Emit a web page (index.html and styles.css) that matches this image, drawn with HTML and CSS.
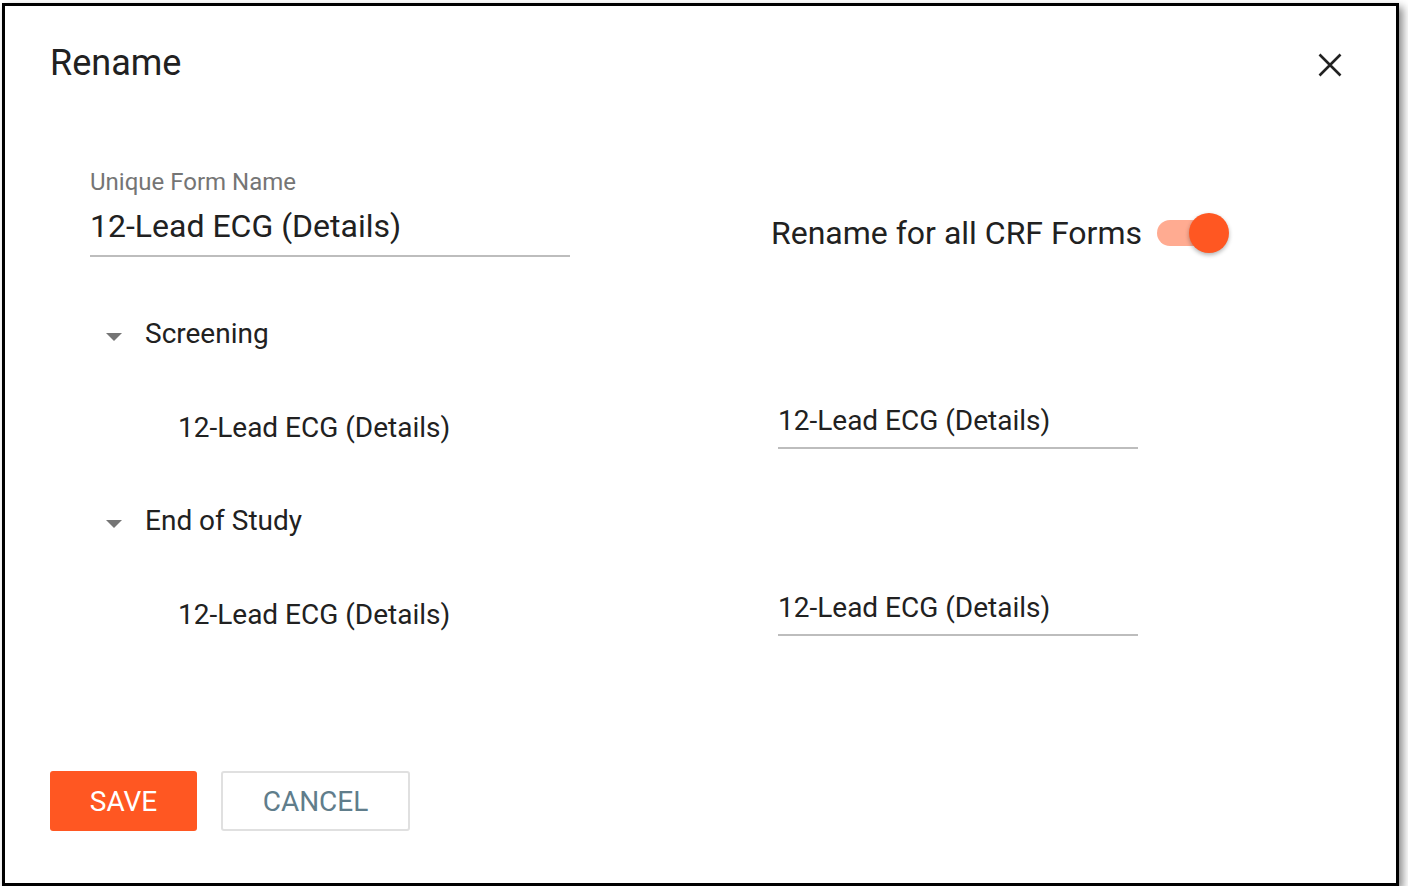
FILE: index.html
```html
<!DOCTYPE html>
<html lang="en">
<head>
  <meta charset="UTF-8">
  <meta name="viewport" content="width=device-width, initial-scale=1.0">
  <title>Rename</title>
  <link rel="stylesheet" href="styles.css">
</head>
<body>
  <div class="dialog">
    <div class="dialog-header">
      <h2 class="dialog-title">Rename</h2>
      <button class="close" aria-label="Close">
        <svg width="24" height="24" viewBox="0 0 24 24">
          <path d="M1.5 1.5 L22.5 22.5 M22.5 1.5 L1.5 22.5" stroke="#222" stroke-width="2.6" fill="none"/>
        </svg>
      </button>
    </div>

    <div class="dialog-body">
      <div class="top-row">
        <div class="main-field">
          <div class="field-label">Unique Form Name</div>
          <div class="field-value">12-Lead ECG (Details)</div>
        </div>
        <div class="toggle-wrap">
          <span class="toggle-label">Rename for all CRF Forms</span>
          <span class="switch">
            <span class="track"></span>
            <span class="thumb"></span>
          </span>
        </div>
      </div>

      <div class="group first">
        <div class="group-head"><span class="caret"></span>Screening</div>
        <div class="group-row">
          <span class="form-name">12-Lead ECG (Details)</span>
          <div class="row-input">12-Lead ECG (Details)</div>
        </div>
      </div>

      <div class="group">
        <div class="group-head"><span class="caret"></span>End of Study</div>
        <div class="group-row">
          <span class="form-name">12-Lead ECG (Details)</span>
          <div class="row-input">12-Lead ECG (Details)</div>
        </div>
      </div>
    </div>

    <div class="dialog-actions">
      <button class="btn save">SAVE</button>
      <button class="btn cancel">CANCEL</button>
    </div>
  </div>
</body>
</html>
```

FILE: styles.css
```css
* {
  box-sizing: border-box;
}

body {
  margin: 0;
  background-color: #fff;
  font-family: Roboto, 'Liberation Sans', Arial, sans-serif;
  color: #212121;
}

.dialog {
  display: flex;
  flex-direction: column;
  width: 1397px;
  height: 883px;
  margin: 3px 0 0 2px;
  border: 3px solid #000;
  background-color: #fff;
  box-shadow: 4px 4px 8px rgba(0, 0, 0, 0.45);
}

.dialog-header {
  display: flex;
  justify-content: space-between;
  align-items: flex-start;
  padding: 35px 54px 0 45px;
}

.dialog-title {
  margin: 0;
  font-size: 36px;
  font-weight: 400;
  line-height: 44px;
  color: #212121;
}

.close {
  display: flex;
  width: 24px;
  height: 24px;
  margin-top: 12px;
  padding: 0;
  border: none;
  background: none;
  cursor: pointer;
}

.dialog-body {
  padding-left: 85px;
}

.top-row {
  display: grid;
  grid-template-columns: 681px auto;
  align-items: start;
  margin-top: 84px;
}

.main-field {
  width: 480px;
  border-bottom: 2px solid #bdbdbd;
  padding-bottom: 9px;
}

.field-label {
  font-size: 24px;
  line-height: 26px;
  color: #757575;
}

.field-value {
  margin-top: 11px;
  font-size: 32px;
  line-height: 40px;
}

.toggle-wrap {
  display: flex;
  align-items: center;
  gap: 15px;
  margin-top: 44px;
}

.toggle-label {
  font-size: 32px;
  line-height: 40px;
}

.switch {
  position: relative;
  width: 72px;
  height: 40px;
}

.switch .track {
  position: absolute;
  left: 0;
  top: 7px;
  width: 58px;
  height: 26px;
  border-radius: 13px;
  background-color: #ffab91;
}

.switch .thumb {
  position: absolute;
  right: 0;
  top: 0;
  width: 40px;
  height: 40px;
  border-radius: 50%;
  background-color: #ff5722;
  box-shadow: 0 2px 4px rgba(0, 0, 0, 0.3);
}

.group.first {
  margin-top: 59px;
}

.group {
  margin-top: 54px;
}

.group-head {
  display: flex;
  align-items: center;
  padding-left: 16px;
  font-size: 28px;
  line-height: 36px;
}

.caret {
  width: 0;
  height: 0;
  margin-right: 23px;
  margin-top: 6px;
  border-left: 8px solid transparent;
  border-right: 8px solid transparent;
  border-top: 8px solid #757575;
}

.group-row {
  display: grid;
  grid-template-columns: 688px 360px;
  align-items: start;
  margin-top: 51px;
  font-size: 28px;
  line-height: 36px;
}

.form-name {
  padding-left: 88px;
  margin-top: 7px;
}

.row-input {
  padding-bottom: 8px;
  border-bottom: 2px solid #bdbdbd;
}

.dialog-actions {
  display: flex;
  gap: 24px;
  margin-top: auto;
  padding: 0 0 52px 45px;
}

.btn {
  height: 60px;
  border-radius: 3px;
  font-family: Roboto, 'Liberation Sans', Arial, sans-serif;
  font-size: 28px;
  cursor: pointer;
}

.btn.save {
  width: 147px;
  border: none;
  background-color: #ff5722;
  color: #fff;
}

.btn.cancel {
  width: 189px;
  border: 2px solid #e0e0e0;
  background-color: #fff;
  color: #607d8b;
}
```
